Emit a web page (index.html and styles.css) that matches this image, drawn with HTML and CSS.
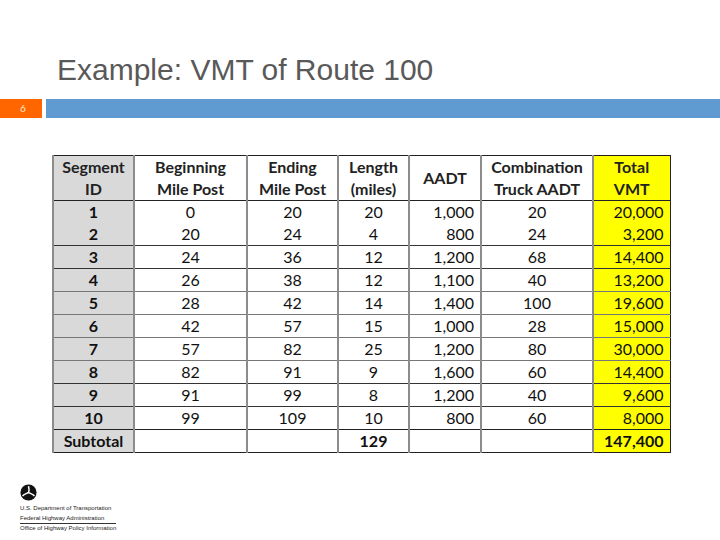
FILE: index.html
```html
<!DOCTYPE html>
<html>
<head>
<meta charset="utf-8">
<link rel="stylesheet" href="styles.css">
</head>
<body>
<div class="slide">
  <h1 class="title">Example: VMT of Route 100</h1>
  <div class="bar">
    <div class="num">6</div>
    <div class="blue"></div>
  </div>
  <div class="table-wrap">
    <table class="vmt">
      <colgroup>
        <col class="c1"><col class="c2"><col class="c3"><col class="c4"><col class="c5"><col class="c6"><col class="c7">
      </colgroup>
      <thead>
        <tr>
          <th class="id">Segment<br>ID</th>
          <th>Beginning<br>Mile Post</th>
          <th>Ending<br>Mile Post</th>
          <th>Length<br>(miles)</th>
          <th>AADT</th>
          <th>Combination<br>Truck AADT</th>
          <th class="tot">Total<br>VMT</th>
        </tr>
      </thead>
      <tbody>
        <tr class="noline"><td class="id">1</td><td>0</td><td>20</td><td>20</td><td class="r">1,000</td><td>20</td><td class="tot r">20,000</td></tr>
        <tr><td class="id">2</td><td>20</td><td>24</td><td>4</td><td class="r">800</td><td>24</td><td class="tot r">3,200</td></tr>
        <tr><td class="id">3</td><td>24</td><td>36</td><td>12</td><td class="r">1,200</td><td>68</td><td class="tot r">14,400</td></tr>
        <tr><td class="id">4</td><td>26</td><td>38</td><td>12</td><td class="r">1,100</td><td>40</td><td class="tot r">13,200</td></tr>
        <tr class="grayline"><td class="id">5</td><td>28</td><td>42</td><td>14</td><td class="r">1,400</td><td>100</td><td class="tot r">19,600</td></tr>
        <tr class="grayline"><td class="id">6</td><td>42</td><td>57</td><td>15</td><td class="r">1,000</td><td>28</td><td class="tot r">15,000</td></tr>
        <tr class="grayline"><td class="id">7</td><td>57</td><td>82</td><td>25</td><td class="r">1,200</td><td>80</td><td class="tot r">30,000</td></tr>
        <tr class="grayline"><td class="id">8</td><td>82</td><td>91</td><td>9</td><td class="r">1,600</td><td>60</td><td class="tot r">14,400</td></tr>
        <tr><td class="id">9</td><td>91</td><td>99</td><td>8</td><td class="r">1,200</td><td>40</td><td class="tot r">9,600</td></tr>
        <tr><td class="id">10</td><td>99</td><td>109</td><td>10</td><td class="r">800</td><td>60</td><td class="tot r">8,000</td></tr>
        <tr class="sub"><td class="id">Subtotal</td><td></td><td></td><td class="b">129</td><td></td><td></td><td class="tot r b">147,400</td></tr>
      </tbody>
    </table>
  </div>
  <div class="logo">
    <svg class="emblem" width="17" height="17" viewBox="0 0 20 20">
      <circle cx="10" cy="10" r="9.5" fill="#111"/>
      <path d="M10 2.5 C11 6 11 8 10 10 C8 11 5 12 3 14 M10 10 C12 11 15 12 17 14" stroke="#fff" stroke-width="1.8" fill="none"/>
    </svg>
    <div class="lt">U.S. Department of Transportation</div>
    <div class="lt">Federal Highway Administration</div>
    <div class="lt office">Office of Highway Policy Information</div>
  </div>
</div>
</body>
</html>
```
FILE: styles.css
```css
html, body {
  margin: 0;
  padding: 0;
  background: #fff;
}
.slide {
  width: 720px;
  height: 540px;
  position: relative;
  overflow: hidden;
  font-family: "Liberation Sans", Arial, sans-serif;
}
.title {
  margin: 0;
  padding: 52px 0 0 57px;
  height: 47px;
  font-weight: normal;
  font-size: 30px;
  line-height: 36px;
  color: #595959;
  letter-spacing: 0;
}
.bar {
  display: flex;
  gap: 4px;
  height: 19px;
}
.num {
  width: 42px;
  background: #ff6600;
  color: #ffe9d0;
  font-size: 10px;
  line-height: 19px;
  padding-left: 4px;
  box-sizing: border-box;
  text-align: center;
  font-family: "Lato", sans-serif;
}
.blue {
  flex: 1;
  background: #5f9bd0;
}
.table-wrap {
  padding: 37px 0 0 52px;
}
.vmt {
  border-collapse: collapse;
  font-family: "Lato", "Open Sans", sans-serif;
  font-size: 16px;
  color: #111;
  border: 1.5px solid #222;
}
.c1 { width: 81px; }
.c2 { width: 113px; }
.c3 { width: 91px; }
.c4 { width: 71px; }
.c5 { width: 72px; }
.c6 { width: 112px; }
.c7 { width: 77px; }
.vmt th, .vmt td {
  padding: 0 6px;
  text-align: center;
  border-left: 2px solid #8c8c8c;
  border-top: 1px solid #333;
  height: 22px;
  line-height: 20px;
  white-space: nowrap;
}
.vmt th {
  height: 44px;
  font-weight: bold;
  color: #222;
  line-height: 22px;
}
.vmt thead tr th { border-top: none; border-bottom: 1.5px solid #222; }
.vmt tr.noline td { border-top: none; }
.vmt tbody tr:nth-child(2) td { border-top: none; }
.vmt tr.grayline td { border-top: 1px solid #777; }
.vmt .id {
  background: #d9d9d9;
  font-weight: bold;
}
.vmt .tot {
  background: #ffff00;
}
.vmt .r { text-align: right; }
.vmt .b { font-weight: bold; }
.vmt tr.sub td { border-top: 1.5px solid #222; }
.logo {
  position: absolute;
  left: 20px;
  top: 484px;
  font-family: "Liberation Sans", Arial, sans-serif;
  color: #222;
}
.emblem { display: block; margin-bottom: 2px; }
.lt {
  font-size: 6px;
  line-height: 10px;
  white-space: nowrap;
}
.office {
  border-top: 1px solid #333;
  width: 96px;
  line-height: 9px;
}
```
